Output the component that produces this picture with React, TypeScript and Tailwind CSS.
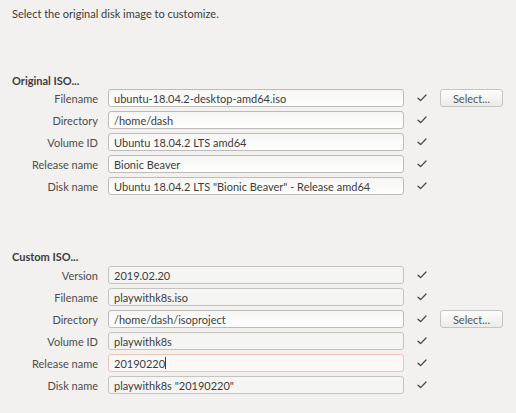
import React from "react";

type Row = { label: string; value: string; variant?: "normal" | "dim" | "focus"; select?: boolean; caret?: boolean };

const original: Row[] = [
  { label: "Filename", value: "ubuntu-18.04.2-desktop-amd64.iso", select: true },
  { label: "Directory", value: "/home/dash" },
  { label: "Volume ID", value: "Ubuntu 18.04.2 LTS amd64" },
  { label: "Release name", value: "Bionic Beaver" },
  { label: "Disk name", value: 'Ubuntu 18.04.2 LTS "Bionic Beaver" - Release amd64' },
];

const custom: Row[] = [
  { label: "Version", value: "2019.02.20", variant: "dim" },
  { label: "Filename", value: "playwithk8s.iso", variant: "dim" },
  { label: "Directory", value: "/home/dash/isoproject", select: true },
  { label: "Volume ID", value: "playwithk8s", variant: "dim" },
  { label: "Release name", value: "20190220", variant: "focus", caret: true },
  { label: "Disk name", value: 'playwithk8s "20190220"', variant: "dim" },
];

function Check() {
  return (
    <svg width="10" height="8" viewBox="0 0 10 8" className="block">
      <path d="M1 4.2 L3.6 6.6 L9 1" fill="none" stroke="#4a4a4a" strokeWidth="1.3" strokeLinecap="round" strokeLinejoin="round" />
    </svg>
  );
}

function FieldRow({ r }: { r: Row }) {
  const box =
    r.variant === "focus"
      ? "border-[#eec3b4] bg-[#fbf8f7]"
      : r.variant === "dim"
      ? "border-[#c5c4c1] bg-[#f5f5f4]"
      : "border-[#bdbcb9] bg-gradient-to-b from-[#f6f6f5] to-white";
  return (
    <div className="flex items-center h-[22px]">
      <div className="w-[86px] text-right text-[#4d4d4d]">{r.label}</div>
      <div className={`ml-[10px] w-[296px] h-[18px] rounded-[3px] border flex items-center pl-[5px] text-[#3c3c3c] ${box}`}>
        <span>{r.value}</span>
        {r.caret && <span className="inline-block w-px h-[12px] bg-[#3c3c3c]" />}
      </div>
      <div className="ml-[13px] w-[10px] flex justify-center">
        <Check />
      </div>
      {r.select && (
        <div className="ml-[13px] w-[63px] h-[18px] rounded-[3px] border border-[#c6c5c2] bg-gradient-to-b from-[#fdfdfc] to-[#ebebe9] flex items-center justify-center text-[#555]">
          Select...
        </div>
      )}
    </div>
  );
}

export default function App() {
  return (
    <div
      className="w-[516px] h-[413px] bg-[#f2f1f0] text-[11px] leading-none pl-[12px] overflow-hidden"
      style={{ fontFamily: "Lato, 'Open Sans', sans-serif" }}
    >
      <div className="pt-[8px] h-[19px] text-[#3c3c3c]">Select the original disk image to customize.</div>
      <div className="mt-[56px] font-bold text-[#3c3c3c] h-[10px]">Original ISO...</div>
      <div className="mt-[2px]">
        {original.map((r) => (
          <FieldRow key={r.label} r={r} />
        ))}
      </div>
      <div className="mt-[54px] font-bold text-[#3c3c3c] h-[10px]">Custom ISO...</div>
      <div className="mt-[3px]">
        {custom.map((r) => (
          <FieldRow key={r.label} r={r} />
        ))}
      </div>
    </div>
  );
}
